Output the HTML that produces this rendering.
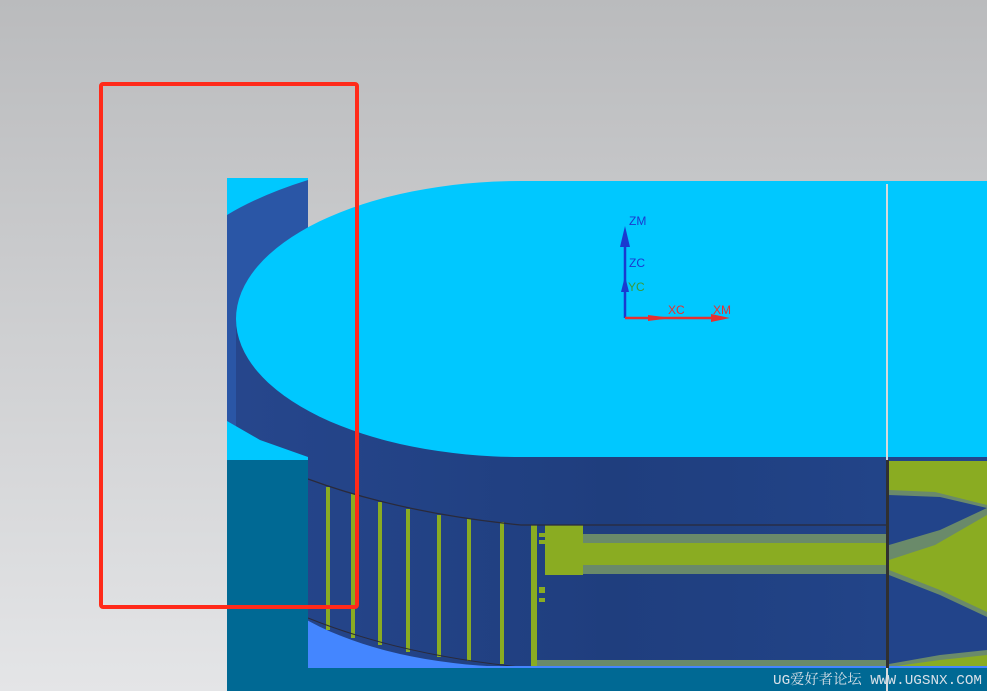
<!DOCTYPE html>
<html><head><meta charset="utf-8"><style>
html,body{margin:0;padding:0;width:987px;height:691px;overflow:hidden}
svg{display:block}
</style></head><body>
<svg width="987" height="691" viewBox="0 0 987 691" xmlns="http://www.w3.org/2000/svg">
<defs>
<linearGradient id="bg" x1="0" y1="0" x2="0" y2="1">
<stop offset="0" stop-color="#babbbd"/><stop offset="1" stop-color="#e4e5e7"/>
</linearGradient>
<linearGradient id="wall" x1="0" y1="0" x2="1" y2="0">
<stop offset="0" stop-color="#26468c"/><stop offset="0.5" stop-color="#1f3e7e"/><stop offset="1" stop-color="#23468c"/>
</linearGradient>
</defs>
<rect width="987" height="691" fill="url(#bg)"/>
<rect x="227" y="178" width="81" height="282" fill="#2a56a6"/>
<path d="M227,178 L308,178 L308,180 Q260,195 227,215 Z" fill="#00c8ff"/>
<rect x="308" y="590" width="600" height="78" fill="#4486ff"/>
<path d="M236,319 L236,529 A285,138 0 0 0 521,667 L987,667 L987,181 L521,181 Z" fill="url(#wall)"/>
<g stroke="#8aac22" stroke-width="4">
<line x1="328" y1="487" x2="328" y2="630"/>
<line x1="353" y1="494" x2="353" y2="638"/>
<line x1="380" y1="502" x2="380" y2="645"/>
<line x1="408" y1="509" x2="408" y2="652"/>
<line x1="439" y1="515" x2="439" y2="657"/>
<line x1="469" y1="519" x2="469" y2="661"/>
<line x1="502" y1="522" x2="502" y2="664"/>
</g>
<rect x="531" y="525" width="6" height="141" fill="#8aac22"/>
<rect x="545" y="525" width="38" height="50" fill="#8aac22"/>
<rect x="583" y="534" width="304" height="40" fill="#6a8a6a"/>
<rect x="583" y="543" width="304" height="22" fill="#8aac22"/>
<rect x="537" y="660" width="350" height="6" fill="#6a8a6a"/>
<rect x="539" y="533" width="6" height="4" fill="#8aac22"/>
<rect x="539" y="540" width="6" height="4" fill="#8aac22"/>
<rect x="539" y="587" width="6" height="6" fill="#8aac22"/>
<rect x="539" y="598" width="6" height="4" fill="#8aac22"/>
<path d="M308,479 Q400,513 521,525 L887,525" fill="none" stroke="#2a2a3a" stroke-width="1.2"/>
<path d="M308,618 Q400,655 521,667 L887,667" fill="none" stroke="#2a2a3a" stroke-width="1"/>
<rect x="889" y="461" width="98" height="206" fill="#8aac22"/>
<path d="M889,490 L935,492 L987,505 L987,515 L935,545 L889,560 Z" fill="#6a8a6a"/>
<path d="M889,495 L940,497 L987,508 L940,530 L889,545 Z" fill="#22448a"/>
<path d="M889,570 L940,590 L987,612 L987,655 L940,660 L889,667 Z" fill="#6a8a6a"/>
<path d="M889,575 L940,595 L987,617 L987,650 L940,655 L889,664 Z" fill="#22448a"/>
<path d="M521,181 L987,181 L987,457 L521,457 A285,138 0 0 1 236,319 A285,138 0 0 1 521,181 Z" fill="#00c8ff"/>
<path d="M227,421 L260,440 L308,457 L308,460 L227,460 Z" fill="#00c8ff"/>
<rect x="227" y="460" width="81" height="231" fill="#006994"/>
<rect x="227" y="667" width="760" height="24" fill="#006994"/>
<rect x="308" y="666" width="679" height="2" fill="#4486ff"/>
<rect x="886" y="184" width="2" height="507" fill="#d8dadc"/>
<rect x="886" y="460" width="3" height="208" fill="#303030"/>
<line x1="625" y1="318" x2="625" y2="240" stroke="#1a3ad0" stroke-width="2.5"/>
<path d="M620,247 L625,226 L630,247 Z" fill="#1a3ad0"/>
<path d="M621,292 L625,276 L629,292 Z" fill="#1a3ad0"/>
<line x1="625" y1="318" x2="720" y2="318" stroke="#e63030" stroke-width="2.5"/>
<path d="M711,314 L730,318 L711,322 Z" fill="#e63030"/>
<path d="M648,315 L672,318 L648,321 Z" fill="#e63030"/>
<g font-family="Liberation Sans, sans-serif" font-size="12">
<text x="629" y="225" fill="#1a3ad0">ZM</text>
<text x="629" y="267" fill="#1a3ad0">ZC</text>
<text x="628" y="291" fill="#3a9a3a">YC</text>
<text x="668" y="314" fill="#e63030">XC</text>
<text x="713" y="314" fill="#e63030">XM</text>
</g>
<rect x="101" y="84" width="256" height="523" rx="2" fill="none" stroke="#ff2a1a" stroke-width="4"/>
<text x="773" y="684" fill="#d8e0e8" font-family="Liberation Mono, Noto Serif CJK SC, monospace" font-size="14" textLength="209" lengthAdjust="spacingAndGlyphs">UG爱好者论坛 WWW.UGSNX.COM</text>
</svg>
</body></html>
